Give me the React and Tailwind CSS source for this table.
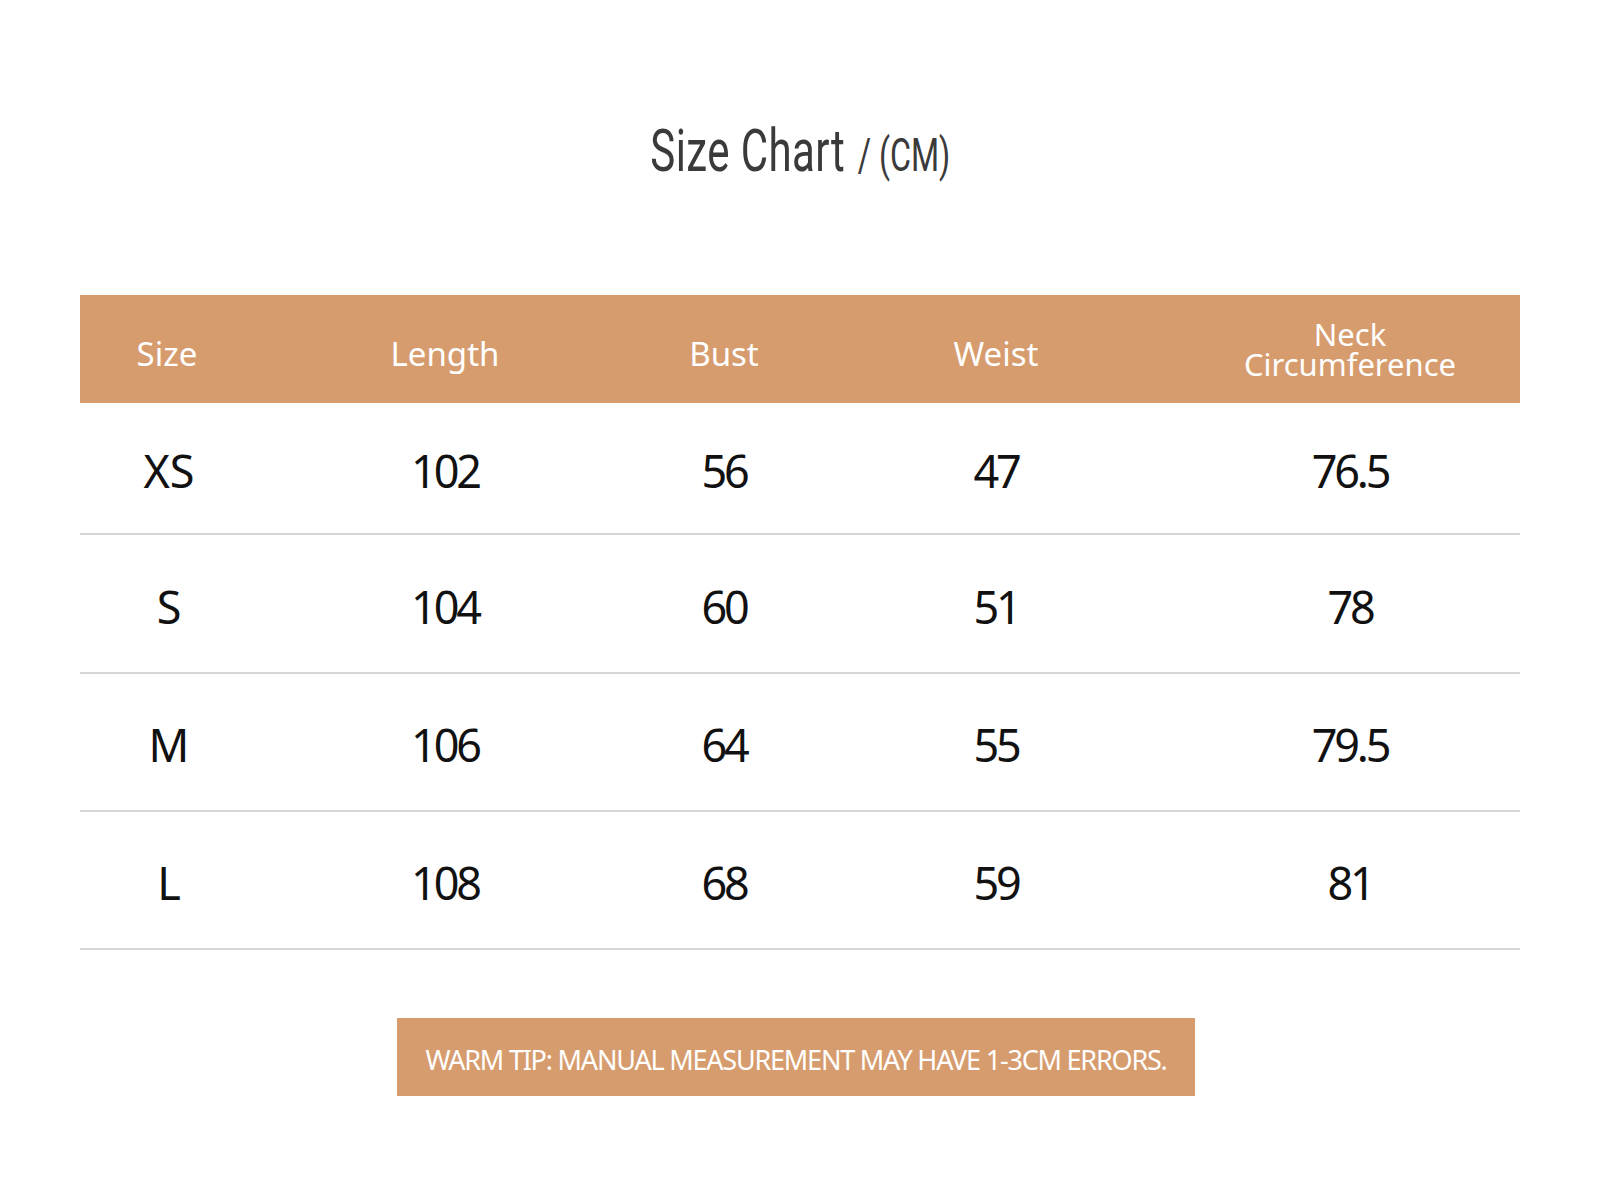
import React from 'react';

const columns = [
  { key: 'size', label: 'Size', width: 'w-[174px]' },
  { key: 'length', label: 'Length', width: 'w-[382px]' },
  { key: 'bust', label: 'Bust', width: 'w-[176px]' },
  { key: 'weist', label: 'Weist', width: 'w-[368px]' },
  { key: 'neck', label: 'Neck Circumference', width: 'w-[340px]' },
];

const rows = [
  { size: 'XS', length: '102', bust: '56', weist: '47', neck: '76.5', h: 'h-[132px]' },
  { size: 'S', length: '104', bust: '60', weist: '51', neck: '78', h: 'h-[139px]' },
  { size: 'M', length: '106', bust: '64', weist: '55', neck: '79.5', h: 'h-[138px]' },
  { size: 'L', length: '108', bust: '68', weist: '59', neck: '81', h: 'h-[138px]' },
];

const App = () => {
  return (
    <div className="w-[1600px] h-[1200px] bg-white flex flex-col items-center font-['Noto_Sans',sans-serif]">
      {/* Title */}
      <h1 className="mt-[121px] h-[60px] flex items-baseline text-[#3a3a3a] font-['Roboto',sans-serif] leading-[60px] scale-x-[0.7] origin-center">
        <span className="text-[60px] tracking-[0.01em] pr-[4px]">Size Chart</span>
        <span className="text-[46px] ml-[14px]">/ (CM)</span>
      </h1>

      {/* Table */}
      <div className="mt-[114px] w-[1440px]">
        <div className="flex h-[108px] bg-[#d69c6e] text-white">
          {columns.map(col => (
            <div
              key={col.key}
              className={`${col.width} flex items-center justify-center text-center text-[33px] pt-[10px]`}
            >
              {col.key === 'neck' ? (
                <span className="-mt-[10px] flex flex-col items-center text-[31px] leading-[30px]">
                  <span>Neck</span>
                  <span>Circumference</span>
                </span>
              ) : (
                col.label
              )}
            </div>
          ))}
        </div>

        {rows.map(row => (
          <div key={row.size} className={`flex ${row.h} border-b-2 border-[#d6d6d6] text-[#111111]`}>
            {columns.map(col => (
              <div
                key={col.key}
                className={`${col.width} flex items-center justify-center text-[45px] pt-[6px] ${col.key === 'size' ? 'pl-[4px]' : 'tracking-[-0.07em]'}`}
              >
                {row[col.key]}
              </div>
            ))}
          </div>
        ))}
      </div>

      {/* Tip */}
      <div className="mt-[68px] w-[798px] h-[78px] bg-[#d69c6e] flex items-center justify-center text-white text-[27px] tracking-[-0.045em] mr-[8px] pt-[6px]">
        WARM TIP: MANUAL MEASUREMENT MAY HAVE 1-3CM ERRORS.
      </div>
    </div>
  );
};

export default App;
